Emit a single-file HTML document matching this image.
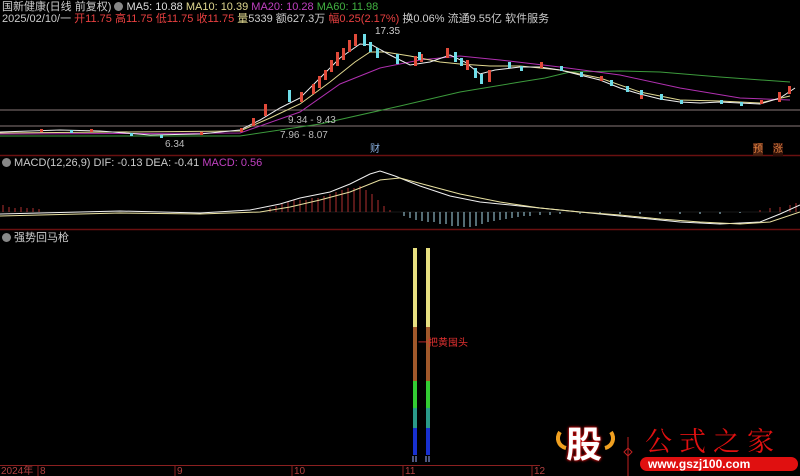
<!DOCTYPE html>
<html><head><meta charset="utf-8"><style>
html,body{margin:0;padding:0;background:#000;width:800px;height:476px;overflow:hidden}
body{position:relative;font-family:"Liberation Sans","Noto Sans CJK SC",sans-serif;font-size:11px;color:#ccc}
.t{position:absolute;white-space:nowrap;line-height:13px}
svg{position:absolute;left:0;top:0}
</style></head><body>
<svg width="800" height="476">
<line x1="0" y1="155.5" x2="800" y2="155.5" stroke="#6a1010" stroke-width="1.5"/>
<line x1="0" y1="229.5" x2="800" y2="229.5" stroke="#6a1010" stroke-width="1.5"/>
<line x1="0" y1="110" x2="800" y2="110" stroke="#887777" stroke-width="1"/>
<line x1="0" y1="126" x2="800" y2="126" stroke="#887777" stroke-width="1"/>
<polyline fill="none" stroke="#3c9a3c" stroke-width="1" points="0,136 240,136 320,124 400,106 460,92 520,82 545,78 570,72 620,71 660,72 720,77 790,82"/>
<polyline fill="none" stroke="#b030b0" stroke-width="1" points="0,134 240,133 300,112 340,84 380,68 420,60 460,56 500,60 560,67 620,75 680,88 740,98 790,100"/>
<polyline fill="none" stroke="#e0d890" stroke-width="1" points="0,133 240,131 270,118 300,104 330,82 355,62 370,52 385,52 410,56 440,62 460,64 490,66 520,66 560,70 600,78 640,92 680,100 720,101 760,103 790,96"/>
<polyline fill="none" stroke="#eee" stroke-width="1" points="0,132 60,130 100,131 150,135 200,134 240,130 260,120 280,108 300,98 320,78 340,58 360,44 372,45 390,55 410,65 430,62 450,55 465,62 480,74 495,70 520,67 540,67 560,70 580,75 600,80 620,88 640,94 660,99 680,102 700,103 720,102 760,104 780,98 795,88"/>
<g fill="#e04a3a">
<rect x="252" y="118" width="3" height="8"/><rect x="264" y="104" width="3" height="12"/><rect x="300" y="92" width="3" height="10"/>
<rect x="312" y="84" width="3" height="10"/><rect x="318" y="76" width="3" height="12"/><rect x="324" y="70" width="3" height="10"/>
<rect x="330" y="60" width="3" height="12"/><rect x="336" y="52" width="3" height="14"/><rect x="342" y="48" width="3" height="12"/>
<rect x="348" y="40" width="3" height="12"/><rect x="354" y="34" width="3" height="12"/><rect x="414" y="56" width="3" height="10"/>
<rect x="420" y="54" width="3" height="8"/><rect x="446" y="48" width="3" height="10"/><rect x="466" y="60" width="3" height="10"/>
<rect x="488" y="70" width="3" height="12"/><rect x="540" y="62" width="3" height="6"/><rect x="600" y="76" width="3" height="5"/>
<rect x="640" y="95" width="3" height="4"/><rect x="760" y="100" width="3" height="4"/><rect x="778" y="92" width="3" height="10"/><rect x="788" y="86" width="3" height="8"/>
<rect x="40" y="129" width="3" height="3"/><rect x="90" y="129" width="3" height="3"/><rect x="200" y="132" width="3" height="3"/><rect x="240" y="128" width="3" height="4"/>
</g>
<g fill="#6fdde8">
<rect x="288" y="90" width="3" height="12"/><rect x="363" y="34" width="3" height="12"/><rect x="369" y="42" width="3" height="10"/>
<rect x="376" y="48" width="3" height="10"/><rect x="396" y="54" width="3" height="10"/><rect x="418" y="52" width="3" height="8"/>
<rect x="454" y="52" width="3" height="10"/><rect x="460" y="58" width="3" height="8"/><rect x="474" y="68" width="3" height="10"/>
<rect x="480" y="74" width="3" height="10"/><rect x="508" y="62" width="3" height="6"/><rect x="520" y="66" width="3" height="5"/>
<rect x="560" y="66" width="3" height="5"/><rect x="580" y="72" width="3" height="5"/><rect x="610" y="80" width="3" height="6"/>
<rect x="626" y="86" width="3" height="6"/><rect x="640" y="90" width="3" height="5"/><rect x="660" y="94" width="3" height="6"/>
<rect x="680" y="100" width="3" height="4"/><rect x="720" y="100" width="3" height="4"/><rect x="740" y="102" width="3" height="4"/>
<rect x="70" y="130" width="3" height="3"/><rect x="130" y="133" width="3" height="3"/><rect x="160" y="135" width="3" height="3"/>
</g>
<line x1="0" y1="212" x2="800" y2="212" stroke="#333" stroke-width="0.5"/>
<g stroke="#b03030" stroke-width="1">
<path d="M3 205V212M9 207V212M15 208V212M21 207V212M27 208V212M33 208V212M39 209V212M270 208V212M276 206V212M282 204V212M288 202V212M294 200V212M300 200V212M306 200V212M312 198V212M318 198V212M324 196V212M330 194V212M336 192V212M342 190V212M348 188V212M354 188V212M360 186V212M366 190V212M372 194V212M378 200V212M384 206V212M390 210V212M760 210V212M770 208V212M780 207V212M790 205V212M796 203V212"/>
</g>
<g stroke="#a8d8e8" stroke-width="1">
<path d="M404 212V216M410 212V218M416 212V220M422 212V221M428 212V222M434 212V222M440 212V224M446 212V224M452 212V226M458 212V226M464 212V227M470 212V227M476 212V226M482 212V224M488 212V222M494 212V221M500 212V220M506 212V219M512 212V218M518 212V217M524 212V216M530 212V216M540 212V215M550 212V215M560 212V214M580 212V214M600 212V214M620 212V214M640 212V214M660 212V214M680 212V214M700 212V214M720 212V214M740 212V213"/>
</g>
<polyline fill="none" stroke="#f0f0f0" stroke-width="1" points="0,214 120,211 200,213 250,210 280,204 300,198 330,192 350,184 370,174 380,171 395,176 420,186 450,196 480,202 520,206 560,210 600,214 640,218 680,222 720,224 760,222 780,214 800,205"/>
<polyline fill="none" stroke="#e8e0a0" stroke-width="1" points="0,216 120,213 200,214 260,212 290,207 320,200 350,192 380,180 400,178 430,186 460,194 500,202 540,208 580,212 620,215 660,219 700,222 740,224 770,222 800,212"/>
<g>
<rect x="413" y="248" width="4" height="80" fill="#e8e080"/><rect x="426" y="248" width="4" height="80" fill="#e8e080"/>
<rect x="413" y="327" width="4" height="54" fill="#a0582a"/><rect x="426" y="327" width="4" height="54" fill="#a0582a"/>
<rect x="413" y="381" width="4" height="27" fill="#33cc33"/><rect x="426" y="381" width="4" height="27" fill="#33cc33"/>
<rect x="413" y="408" width="4" height="20" fill="#2a9a8a"/><rect x="426" y="408" width="4" height="20" fill="#2a9a8a"/>
<rect x="413" y="428" width="4" height="27" fill="#1830d0"/><rect x="426" y="428" width="4" height="27" fill="#1830d0"/>
<path d="M413 456V462M416 456V462M426 456V462M429 456V462" stroke="#9ab0ff" stroke-width="1"/>
</g>
<line x1="0" y1="465.5" x2="540" y2="465.5" stroke="#8a2020"/>
<path d="M38 465V476M175 465V476M292 465V476M403 465V476M532 465V476" stroke="#8a2020"/>
<line x1="628" y1="437" x2="628" y2="476" stroke="#c02020"/>
<path d="M628 448l4 4-4 4-4-4z" fill="none" stroke="#c02020"/>
<rect x="640" y="457" width="158" height="14" rx="7" fill="#e01010"/>
<path d="M560 432c-4 6-2 14 6 16" stroke="#f0a020" stroke-width="4" fill="none"/>
<path d="M611 432c4 6 2 14-6 16" stroke="#f0a020" stroke-width="4" fill="none"/>
</svg>
<div class="t" style="left:2px;top:1px">国新健康(日线 前复权) <span style="display:inline-block;width:9px;height:9px;border-radius:50%;background:#888;vertical-align:-1px"></span> <span style="color:#ddd">MA5: 10.88</span> <span style="color:#e0d890">MA10: 10.39</span> <span style="color:#c040c0">MA20: 10.28</span> <span style="color:#40b040">MA60: 11.98</span></div>
<div class="t" style="left:2px;top:13px;color:#ccc">2025/02/10/一 <span style="color:#e84040">开11.75 高11.75 低11.75 收11.75</span> <span style="color:#e0d890">量</span>5339 额627.3万 <span style="color:#e84040">幅0.25(2.17%)</span> 换0.06% 流通9.55亿 软件服务</div>
<div class="t" style="left:375px;top:25px;font-size:10px">17.35</div>
<div class="t" style="left:288px;top:114px;font-size:10px;color:#bbb">9.34 - 9.43</div>
<div class="t" style="left:280px;top:129px;font-size:10px;color:#bbb">7.96 - 8.07</div>
<div class="t" style="left:165px;top:138px;font-size:10px;color:#bbb">6.34</div>
<div class="t" style="left:370px;top:143px;font-size:10px;color:#8ab0e0">财</div>
<div class="t" style="left:753px;top:143px;font-size:10px;color:#e08040;background:#4a2010">预</div>
<div class="t" style="left:773px;top:143px;font-size:10px;color:#e08040;background:#301008">涨</div>
<div class="t" style="left:2px;top:157px"><span style="display:inline-block;width:9px;height:9px;border-radius:50%;background:#888;vertical-align:-1px"></span> MACD(12,26,9) DIF: -0.13 DEA: -0.41 <span style="color:#c040c0">MACD: 0.56</span></div>
<div class="t" style="left:2px;top:232px"><span style="display:inline-block;width:9px;height:9px;border-radius:50%;background:#888;vertical-align:-1px"></span> 强势回马枪</div>
<div class="t" style="left:418px;top:337px;font-size:10px;color:#e03030">一把黄囤头</div>
<div class="t" style="left:1px;top:465px;font-size:10px;color:#b04040">2024年</div>
<div class="t" style="left:40px;top:465px;font-size:10px;color:#b04040">8</div>
<div class="t" style="left:177px;top:465px;font-size:10px;color:#b04040">9</div>
<div class="t" style="left:294px;top:465px;font-size:10px;color:#b04040">10</div>
<div class="t" style="left:405px;top:465px;font-size:10px;color:#b04040">11</div>
<div class="t" style="left:534px;top:465px;font-size:10px;color:#b04040">12</div>
<div class="t" style="left:566px;top:425px;font-size:36px;line-height:40px;font-weight:bold;color:#fff;text-shadow:0 0 3px #e01010,0 0 2px #e01010">股</div>
<div class="t" style="left:645px;top:425px;font-size:27px;line-height:30px;color:#e01010;letter-spacing:7px;font-family:'Noto Serif CJK SC',serif">公式之家</div>
<div class="t" style="left:648px;top:457px;font-size:12px;line-height:14px;font-weight:bold;color:#fff">www.gszj100.com</div>
</body></html>
